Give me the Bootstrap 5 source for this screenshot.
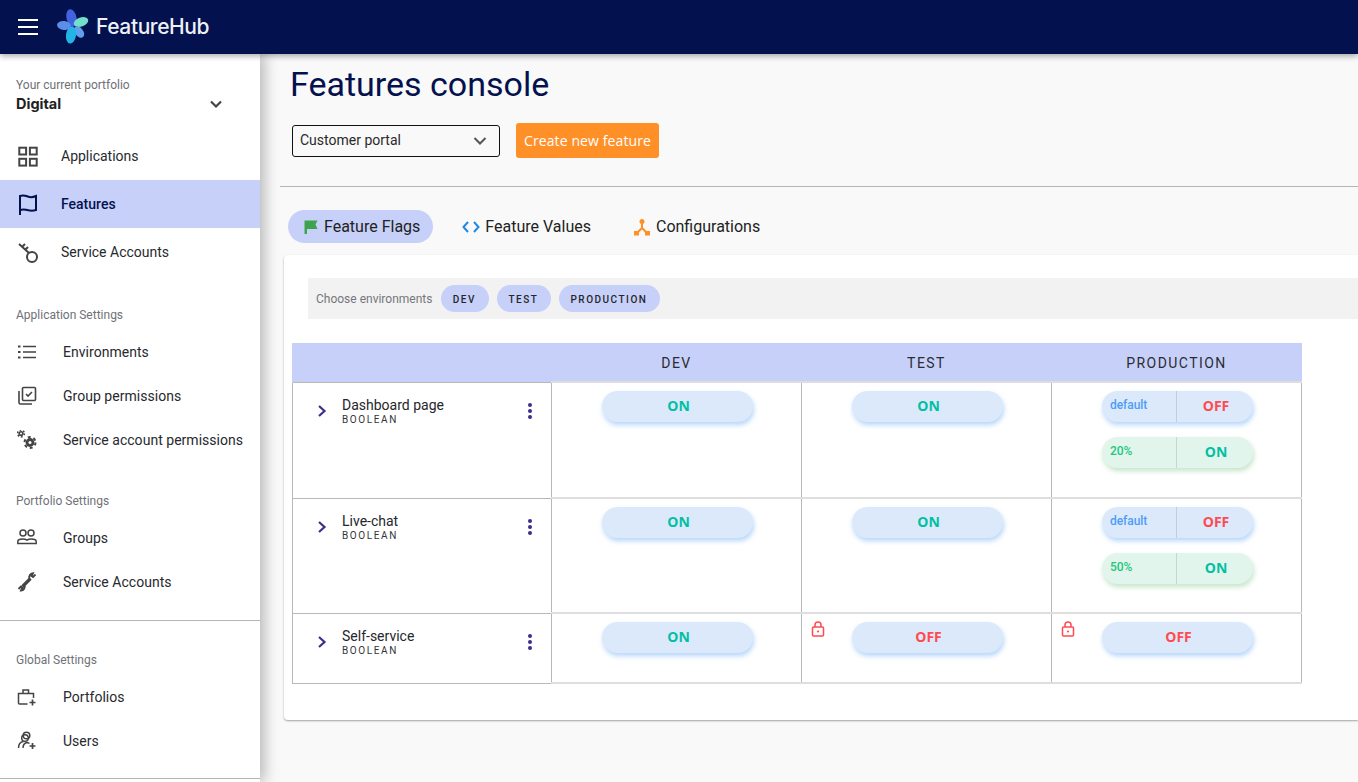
<!DOCTYPE html>
<html lang="en">
<head>
<meta charset="utf-8">
<title>FeatureHub</title>
<link href="https://cdn.jsdelivr.net/npm/bootstrap@5.3.0/dist/css/bootstrap.min.css" rel="stylesheet">
<style>
html,body{height:782px;overflow:hidden}
body{background:#f9f9f9;font-family:Roboto,"Liberation Sans",sans-serif;color:#1f2126}
.hub-top{height:54px;background:#04114f;box-shadow:0 2px 6px rgba(0,0,0,.35);position:relative;z-index:3;padding:0 0 0 18px}
.hub-burger{width:20px;height:16px;display:flex;flex-direction:column;justify-content:space-between;margin-right:19px}
.hub-burger i{display:block;height:2px;background:#fff}
.hub-logotext{font-family:Inter,Roboto,sans-serif;font-size:21px;font-weight:500;color:#eef0f6;letter-spacing:-.4px;margin-left:7px}
.hub-body{height:728px}
.hub-side{width:260px;flex:none;background:#fff;box-shadow:4px 0 14px rgba(0,0,0,.28);position:relative;z-index:2;height:728px;overflow:hidden}
.hub-pf{height:78px;padding:23px 36px 0 16px}
.hub-cap{font-size:12px;line-height:16px;color:#6f7176;letter-spacing:0}
.hub-pfname{font-family:Inter,Roboto,sans-serif;font-size:14.5px;line-height:22px;font-weight:700;color:#222}
.hub-pfchev{margin-top:19px}
.hub-item{display:flex;align-items:center;height:48px;color:#27292e;font-size:14px;text-decoration:none;padding-left:17px}
.hub-item svg{width:22px;height:22px;flex:none;margin-right:22px}
.hub-item.hub-on{background:#c7d0f8;color:#04114f;font-weight:500}
.hub-sub{display:flex;align-items:center;height:44px;color:#27292e;font-size:14px;letter-spacing:.03px;text-decoration:none;padding-left:17px}
.hub-sub svg{width:20px;height:20px;flex:none;margin-right:26px}
.hub-cap2{font-size:12px;line-height:16px;color:#6f7176;padding-left:16px;margin-top:31px}
.hub-group{padding-top:7px}
.hub-line{border-top:1px solid #b5b5b5;margin-top:16px}
.hub-line2{margin-top:15px}
.hub-main{flex:1;min-width:0;overflow:hidden}
.hub-title{font-size:34px;line-height:40px;font-weight:400;color:#04114f;margin:10px 0 0 30px}
.hub-tools{margin:19px 0 0 32px;height:35px}
.hub-select{width:208px;height:32px;border:1px solid #111;border-radius:3px;padding:0 12px 0 7px;font-size:14px;color:#2a2a2a;background:transparent}
.hub-create{height:35px;width:143px;margin-left:16px;background:#ff9027;border:0;border-radius:3px;color:#fff;font-family:"Open Sans",sans-serif;font-size:14px;letter-spacing:.1px;padding:0}
.hub-rule{border-top:1px solid #b5b5b5;margin:28px 0 0 20px;height:0}
.hub-tabs{margin:23px 0 0 28px;height:33px}
.hub-tab{display:flex;align-items:center;height:33px;border-radius:17px;font-size:16px;color:#222}
.hub-tab.hub-act{background:#c7d0f8;padding:0 13px 0 15px;margin-right:29px}
.hub-tab svg{flex:none;margin-right:5px}
.hub-tabgap{margin-left:42px}
.hub-panel{margin:12px 0 0 24px;height:465px;background:#fff;border-radius:4px 0 0 4px;box-shadow:0 1px 2px rgba(0,0,0,.35);padding:23px 0 0 24px;overflow:hidden}
.hub-envs{height:41px;background:#f2f2f2;padding-left:8px;font-size:12px;color:#75777b}
.hub-envs>span:first-child{margin-right:9px}
.hub-chip{background:#c7d0f8;border-radius:14px;height:27px;display:flex;align-items:center;justify-content:center;font-size:10px;font-weight:500;letter-spacing:1.5px;color:#25272e;padding:1px 2px 0 0}
.hub-chip-dev{width:48px}
.hub-chip-test{width:54px}
.hub-chip-prod{width:101px}
.hub-tbl{width:1009px;margin:24px 0 0 -16px;border-collapse:collapse;table-layout:fixed}
.hub-c1{width:259px}
.hub-c2{width:250px}
.hub-tbl th{height:39px;background:#c7d0f8;font-weight:400;font-size:14px;letter-spacing:1.45px;text-align:center;color:#2a2c33;padding-top:3px;border-left:1px solid #c7d0f8;border-right:1px solid #c7d0f8}
.hub-tbl td{border:1px solid #b8b8b8;vertical-align:top;padding:0}
.hub-tbl td.hub-v{border-top-color:#dedede;border-top-width:2px;border-bottom-color:#dedede;border-bottom-width:2px}
.hub-r1{height:116px}
.hub-r2{height:115px}
.hub-r3{height:70px}
.hub-name{padding:13px 18px 0 22px}
.hub-chev{margin:8px 13px 0 0;flex:none}
.hub-kebab{margin-top:6px;flex:none}
.hub-fname{font-size:14px;line-height:18px;color:#25272c}
.hub-ftype{font-size:10px;line-height:12px;letter-spacing:1.6px;color:#33353a}
.hub-cell{padding-top:8px;display:flex;flex-direction:column;align-items:center;gap:15px;position:relative}
.hub-pill{width:151px;height:31px;border-radius:15.5px;background:#dbe9fb;box-shadow:1px 3px 5px rgba(120,180,245,.55);display:flex;font-family:"Open Sans",sans-serif;font-weight:700;font-size:14px;align-items:center;justify-content:center;margin-left:2px;padding:0 0 2px 2px}
.hub-on-t{color:#00c0a3}
.hub-off-t{color:#ff4a50}
.hub-split{justify-content:flex-start;padding:0}
.hub-split .hub-l{width:75px;height:100%;border-right:1px solid #c3cdd8;font-family:Roboto,sans-serif;font-weight:500;font-size:12px;letter-spacing:-.05px;color:#4d9df5;padding:7px 0 0 8px;line-height:15px}
.hub-split .hub-r{flex:1;text-align:center;padding:0 0 3px 2px}
.hub-green{background:#e2f5ec;box-shadow:1px 3px 5px rgba(140,205,150,.5)}
.hub-green .hub-l{color:#22c77c;border-right-color:#c5d8cf}
.hub-lock{position:absolute;left:8px;top:7px;width:16px;height:16px}
</style>
</head>
<body>
<nav class="hub-top d-flex align-items-center">
  <div class="hub-burger"><i></i><i></i><i></i></div>
  <svg width="32" height="36" viewBox="0 0 32 36">
    <ellipse cx="14.500" cy="9" rx="5" ry="9" fill="#4163e0" transform="rotate(-12 14.500 9)"/>
    <ellipse cx="24" cy="13" rx="7.500" ry="4.500" fill="#72e0c8" transform="rotate(-20 24 13)"/>
    <ellipse cx="22" cy="23" rx="4.200" ry="6.500" fill="#5fa0ee" transform="rotate(-38 22 23)"/>
    <ellipse cx="14" cy="26" rx="5" ry="8.500" fill="#22b4e6" transform="rotate(8 14 26)"/>
    <ellipse cx="7" cy="16.500" rx="7" ry="4.500" fill="#5a8ee8" transform="rotate(8 7 16.500)"/>
  </svg>
  <span class="hub-logotext">FeatureHub</span>
</nav>
<div class="hub-body d-flex">
  <aside class="hub-side">
    <div class="hub-pf d-flex justify-content-between">
      <div><div class="hub-cap">Your current portfolio</div><div class="hub-pfname">Digital</div></div>
      <svg class="hub-pfchev" width="16" height="16" viewBox="0 0 16 16"><path d="M3 5.500l5 5 5-5" fill="none" stroke="#444" stroke-width="2.200"/></svg>
    </div>
    <a class="hub-item" href="#"><svg viewBox="0 0 22 22" fill="none" stroke="#444" stroke-width="2"><rect x="2.300" y="2.700" width="6.800" height="6.800"/><rect x="12.900" y="2.700" width="6.800" height="6.800"/><rect x="2.300" y="13.800" width="6.800" height="6.800"/><rect x="12.900" y="13.800" width="6.800" height="6.800"/></svg>Applications</a>
    <a class="hub-item hub-on" href="#"><svg viewBox="0 0 22 22" fill="none" stroke="#04114f" stroke-width="2"><path d="M3 22V3c4-1.500 6 0 8.500.8 2.500.8 5 .3 7.500-.8v14c-3 1-5 1-7.500.3-2.500-.8-5.500-1.300-8.500-.3"/></svg>Features</a>
    <a class="hub-item" href="#"><svg viewBox="0 0 22 22" fill="none" stroke="#444" stroke-width="2"><circle cx="15" cy="16" r="5"/><path d="M12 12L2 3M5 6l3-3M8 9l3-3"/></svg>Service Accounts</a>
    <div class="hub-cap2">Application Settings</div>
    <div class="hub-group">
    <a class="hub-sub" href="#"><svg viewBox="0 0 20 20" fill="none" stroke="#444" stroke-width="1.600"><path d="M6 4.500h13M6 10h13M6 15.500h13"/><path d="M1 4.500h2.500M1 10h2.500M1 15.500h2.500" stroke-width="2"/></svg>Environments</a>
    <a class="hub-sub" href="#"><svg viewBox="0 0 20 20" fill="none" stroke="#444" stroke-width="1.600"><rect x="5.500" y="1.500" width="13" height="13" rx="1"/><path d="M2 5v11.500a1.500 1.500 0 0 0 1.500 1.500H15M9 8l2 2 4-4"/></svg>Group permissions</a>
    <a class="hub-sub" href="#"><svg viewBox="0 0 20 20"><circle cx="4" cy="3.500" r="2.600" fill="#444"/><circle cx="4" cy="3.500" r="3.400" fill="none" stroke="#444" stroke-width="1.500" stroke-dasharray="1.800 1.760"/><circle cx="4" cy="3.500" r="1" fill="#fff"/><circle cx="13" cy="12.500" r="4.400" fill="#444"/><circle cx="13" cy="12.500" r="5.500" fill="none" stroke="#444" stroke-width="2" stroke-dasharray="2.900 2.860"/><circle cx="13" cy="12.500" r="1.500" fill="#fff"/></svg>Service account permissions</a>
    </div>
    <div class="hub-cap2">Portfolio Settings</div>
    <div class="hub-group">
    <a class="hub-sub" href="#"><svg viewBox="0 0 20 20" fill="none" stroke="#444" stroke-width="1.500"><circle cx="6" cy="5" r="3"/><circle cx="14" cy="5" r="3"/><path d="M.8 15.500v-2c0-1.500 2.500-2.500 5-2.500 1.700 0 3.200.5 4.200 1.200 1-.7 2.500-1.200 4.200-1.200 2.500 0 5 1 5 2.500v2z"/></svg>Groups</a>
    <a class="hub-sub" href="#"><svg viewBox="0 0 20 20" fill="none" stroke="#444"><path d="M5.500 14.500l8-8" stroke-width="3.200"/><path d="M18.500 2.500l-2.500 2.500-1.500-1 1.500-2.800a4 4 0 0 0-3.500 5.500M1.500 17l2.500-2.500 1.500 1-1.500 3a4 4 0 0 0 3.500-5.500" stroke-width="1.800"/></svg>Service Accounts</a>
    </div>
    <div class="hub-line"></div>
    <div class="hub-cap2">Global Settings</div>
    <div class="hub-group">
    <a class="hub-sub" href="#"><svg viewBox="0 0 20 20" fill="none" stroke="#444" stroke-width="1.500"><path d="M10.500 17H2.500a1 1 0 0 1-1-1V6.500h15V11M6 6.500V3h5.500v3.500"/><path d="M15.500 12.500v6M12.500 15.500h6" stroke-width="1.700"/></svg>Portfolios</a>
    <a class="hub-sub" href="#"><svg viewBox="0 0 20 20" fill="none" stroke="#444" stroke-width="1.500"><circle cx="9.500" cy="4.500" r="3.300"/><circle cx="8" cy="7" r="3.300"/><path d="M1.500 17c0-3.500 1.500-6 5-6.500M6 17c0-2.500 1-4.500 3.500-5.500 1 0 2 .3 3 1"/><path d="M15.500 12v6M12.500 15h6" stroke-width="1.700"/></svg>Users</a>
    </div>
    <div class="hub-line hub-line2"></div>
  </aside>
  <main class="hub-main">
    <h1 class="hub-title">Features console</h1>
    <div class="hub-tools d-flex align-items-center">
      <div class="hub-select d-flex align-items-center justify-content-between"><span>Customer portal</span><svg width="14" height="14" viewBox="0 0 14 14"><path d="M1.500 4l5.500 5.500L12.500 4" fill="none" stroke="#555" stroke-width="2"/></svg></div>
      <button class="hub-create" type="button">Create new feature</button>
    </div>
    <div class="hub-rule"></div>
    <div class="hub-tabs d-flex align-items-center">
      <div class="hub-tab hub-act"><svg width="16" height="16" viewBox="0 0 16 16"><path d="M1.500 1.500h13l-2 4 2 4.500H4v5H1.500z" fill="#3fa34d"/></svg>Feature Flags</div>
      <div class="hub-tab"><svg width="18" height="14" viewBox="0 0 18 14" fill="none" stroke="#1e88e5" stroke-width="2"><path d="M6 2L1.500 7 6 12M12 2l4.500 5L12 12"/></svg>Feature Values</div>
      <div class="hub-tab hub-tabgap"><svg width="18" height="18" viewBox="0 0 18 18" fill="#ff9027"><circle cx="9" cy="3.500" r="2.500"/><rect x="1" y="13" width="5" height="4.500"/><rect x="12" y="13" width="5" height="4.500"/><path d="M9 5v5L4 15M9 10l5 5" fill="none" stroke="#ff9027" stroke-width="2"/></svg>Configurations</div>
    </div>
    <section class="hub-panel">
      <div class="hub-envs d-flex align-items-center">
        <span>Choose environments</span>
        <span class="hub-chip hub-chip-dev">DEV</span>
        <span class="hub-chip hub-chip-test ms-2">TEST</span>
        <span class="hub-chip hub-chip-prod ms-2">PRODUCTION</span>
      </div>
      <table class="hub-tbl">
        <colgroup><col class="hub-c1"><col class="hub-c2"><col class="hub-c2"><col class="hub-c2"></colgroup>
        <thead><tr><th></th><th>DEV</th><th>TEST</th><th>PRODUCTION</th></tr></thead>
        <tbody>
          <tr class="hub-r1">
            <td><div class="hub-name d-flex align-items-start"><svg class="hub-chev" width="14" height="14" viewBox="0 0 14 14"><path d="M4 2l5.500 5L4 12" fill="none" stroke="#3b2e8c" stroke-width="2.200"/></svg><div class="flex-grow-1"><div class="hub-fname">Dashboard page</div><div class="hub-ftype">BOOLEAN</div></div><svg class="hub-kebab" width="6" height="18" viewBox="0 0 6 18" fill="#3b2e8c"><circle cx="3" cy="3" r="2"/><circle cx="3" cy="9" r="2"/><circle cx="3" cy="15" r="2"/></svg></div></td>
            <td class="hub-v"><div class="hub-cell"><div class="hub-pill hub-on-t">ON</div></div></td>
            <td class="hub-v"><div class="hub-cell"><div class="hub-pill hub-on-t">ON</div></div></td>
            <td class="hub-v"><div class="hub-cell"><div class="hub-pill hub-split"><div class="hub-l">default</div><div class="hub-r hub-off-t">OFF</div></div><div class="hub-pill hub-split hub-green"><div class="hub-l">20%</div><div class="hub-r hub-on-t">ON</div></div></div></td>
          </tr>
          <tr class="hub-r2">
            <td><div class="hub-name d-flex align-items-start"><svg class="hub-chev" width="14" height="14" viewBox="0 0 14 14"><path d="M4 2l5.500 5L4 12" fill="none" stroke="#3b2e8c" stroke-width="2.200"/></svg><div class="flex-grow-1"><div class="hub-fname">Live-chat</div><div class="hub-ftype">BOOLEAN</div></div><svg class="hub-kebab" width="6" height="18" viewBox="0 0 6 18" fill="#3b2e8c"><circle cx="3" cy="3" r="2"/><circle cx="3" cy="9" r="2"/><circle cx="3" cy="15" r="2"/></svg></div></td>
            <td class="hub-v"><div class="hub-cell"><div class="hub-pill hub-on-t">ON</div></div></td>
            <td class="hub-v"><div class="hub-cell"><div class="hub-pill hub-on-t">ON</div></div></td>
            <td class="hub-v"><div class="hub-cell"><div class="hub-pill hub-split"><div class="hub-l">default</div><div class="hub-r hub-off-t">OFF</div></div><div class="hub-pill hub-split hub-green"><div class="hub-l">50%</div><div class="hub-r hub-on-t">ON</div></div></div></td>
          </tr>
          <tr class="hub-r3">
            <td><div class="hub-name d-flex align-items-start"><svg class="hub-chev" width="14" height="14" viewBox="0 0 14 14"><path d="M4 2l5.500 5L4 12" fill="none" stroke="#3b2e8c" stroke-width="2.200"/></svg><div class="flex-grow-1"><div class="hub-fname">Self-service</div><div class="hub-ftype">BOOLEAN</div></div><svg class="hub-kebab" width="6" height="18" viewBox="0 0 6 18" fill="#3b2e8c"><circle cx="3" cy="3" r="2"/><circle cx="3" cy="9" r="2"/><circle cx="3" cy="15" r="2"/></svg></div></td>
            <td class="hub-v"><div class="hub-cell"><div class="hub-pill hub-on-t">ON</div></div></td>
            <td class="hub-v"><div class="hub-cell"><svg class="hub-lock" viewBox="0 0 16 16" fill="none" stroke="#ff4a50" stroke-width="1.500"><rect x="2.500" y="6" width="11" height="9" rx="1"/><path d="M5 6V4a3 3 0 0 1 6 0v2"/><circle cx="8" cy="10.500" r="1.100" fill="#ff4a50" stroke="none"/></svg><div class="hub-pill hub-off-t">OFF</div></div></td>
            <td class="hub-v"><div class="hub-cell"><svg class="hub-lock" viewBox="0 0 16 16" fill="none" stroke="#ff4a50" stroke-width="1.500"><rect x="2.500" y="6" width="11" height="9" rx="1"/><path d="M5 6V4a3 3 0 0 1 6 0v2"/><circle cx="8" cy="10.500" r="1.100" fill="#ff4a50" stroke="none"/></svg><div class="hub-pill hub-off-t">OFF</div></div></td>
          </tr>
        </tbody>
      </table>
    </section>
  </main>
</div>
<script src="https://cdn.jsdelivr.net/npm/bootstrap@5.3.0/dist/js/bootstrap.bundle.min.js"></script>
</body>
</html>
